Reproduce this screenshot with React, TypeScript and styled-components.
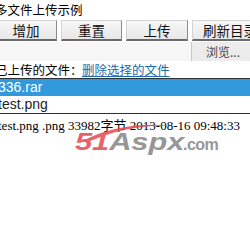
import styled, { createGlobalStyle } from "styled-components";

const GlobalStyle = createGlobalStyle`
  html {
    overflow: hidden;
  }
  body {
    margin: 0;
    padding: 0;
    background: #ffffff;
  }
`;

const Page = styled.div`
  position: relative;
  margin-left: -5px;
  width: 270px;
  height: 235px;
  font-family: "Liberation Sans", "Noto Sans CJK SC", sans-serif;
  color: #000;
`;

const Title = styled.div`
  font-family: "Noto Sans CJK SC", sans-serif;
  font-size: 12.5px;
  line-height: 18px;
  padding-top: 1px;
  height: 19px;
`;

const ButtonRow = styled.div`
  display: flex;
  gap: 4px;
  height: 22px;
`;

const Button = styled.button<{ $width: number }>`
  width: ${(p) => p.$width}px;
  height: 21px;
  padding: 0;
  font-family: "Noto Sans CJK SC", sans-serif;
  font-size: 13.5px;
  line-height: 18px;
  color: #111;
  background: linear-gradient(#f7f7f7, #e8e8e8);
  border-top: 1px solid #d4d4d4;
  border-left: 1px solid #d4d4d4;
  border-right: 1px solid #8a8a8a;
  border-bottom: 2px solid #6a6a6a;
  flex-shrink: 0;
`;

const FileRow = styled.div`
  display: flex;
  height: 19px;
`;

const FileBox = styled.div`
  width: 196px;
  background: #f6f6f6;
`;

const Browse = styled.div`
  flex: 1;
  background: #ececec;
  border-left: 1px solid #c9c9c9;
  font-family: "Noto Sans CJK SC", sans-serif;
  font-size: 12px;
  line-height: 19px;
  color: #444;
  padding-left: 14px;
`;

const Header = styled.div`
  display: flex;
  font-family: "Noto Sans CJK SC", sans-serif;
  font-size: 12.5px;
  line-height: 17px;
  height: 17px;
  white-space: nowrap;
`;

const Label = styled.span`
  width: 87px;
  flex-shrink: 0;
`;

const Link = styled.a`
  color: #1b6aae;
  text-decoration: underline;
`;

const ListBox = styled.div`
  border-top: 1px solid #303030;
  border-bottom: 1px solid #303030;
  padding-bottom: 1px;
`;

const Option = styled.div<{ $selected?: boolean }>`
  height: 16.5px;
  line-height: 16px;
  font-size: 14px;
  padding-left: 3px;
  background: ${(p) => (p.$selected ? "#3399dd" : "#ffffff")};
  color: ${(p) => (p.$selected ? "#ffffff" : "#222")};
`;

const Detail = styled.div`
  margin-top: 3px;
  font-family: "Liberation Serif", "Noto Sans CJK SC", serif;
  font-size: 13px;
  line-height: 18px;
  padding-left: 3px;
  white-space: nowrap;
`;

const Watermark = styled.div`
  position: absolute;
  left: 80px;
  top: 120px;
  width: 150px;
  height: 36px;
  opacity: 0.85;
  pointer-events: none;
`;

const Mark = styled.div`
  position: absolute;
  left: 0;
  top: 8px;
  display: flex;
  align-items: baseline;
  white-space: nowrap;
`;

const Wide = styled.span`
  display: inline-block;
  font-family: "Liberation Sans", sans-serif;
  font-weight: bold;
  font-style: italic;
  font-size: 24px;
  line-height: 28px;
  width: 108px;
  transform: scaleX(1.28);
  transform-origin: left center;
`;

const Red = styled.span`
  color: #e5484f;
`;

const Gray = styled.span`
  color: #858585;
`;

const Dot = styled.span`
  font-family: "Liberation Sans", sans-serif;
  font-weight: bold;
  color: #858585;
  font-size: 16px;
  letter-spacing: -0.5px;
`;

function Swoosh() {
  return (
    <svg
      width="150"
      height="22"
      viewBox="0 0 150 22"
      style={{ position: "absolute", left: 0, top: 0, zIndex: 1 }}
    >
      <path
        d="M8 21 C 32 8, 64 2, 98 6 C 68 4, 38 11, 15 21 Z"
        fill="#e5484f"
      />
    </svg>
  );
}

export default function App() {
  return (
    <>
      <GlobalStyle />
      <Page>
        <Title>多文件上传示例</Title>
        <ButtonRow>
          <Button $width={62}>增加</Button>
          <Button $width={61}>重置</Button>
          <Button $width={62}>上传</Button>
          <Button $width={76}>刷新目录</Button>
        </ButtonRow>
        <FileRow>
          <FileBox />
          <Browse>浏览...</Browse>
        </FileRow>
        <Header>
          <Label>已上传的文件：</Label>
          <Link href="#">删除选择的文件</Link>
        </Header>
        <ListBox>
          <Option $selected>336.rar</Option>
          <Option>test.png</Option>
        </ListBox>
        <Detail>test.png .png 33982字节 2013-08-16 09:48:33</Detail>
        <Watermark>
          <Swoosh />
          <Mark>
            <Wide>
              <Red>51</Red>
              <Gray>Aspx</Gray>
            </Wide>
            <Dot>.com</Dot>
          </Mark>
        </Watermark>
      </Page>
    </>
  );
}
